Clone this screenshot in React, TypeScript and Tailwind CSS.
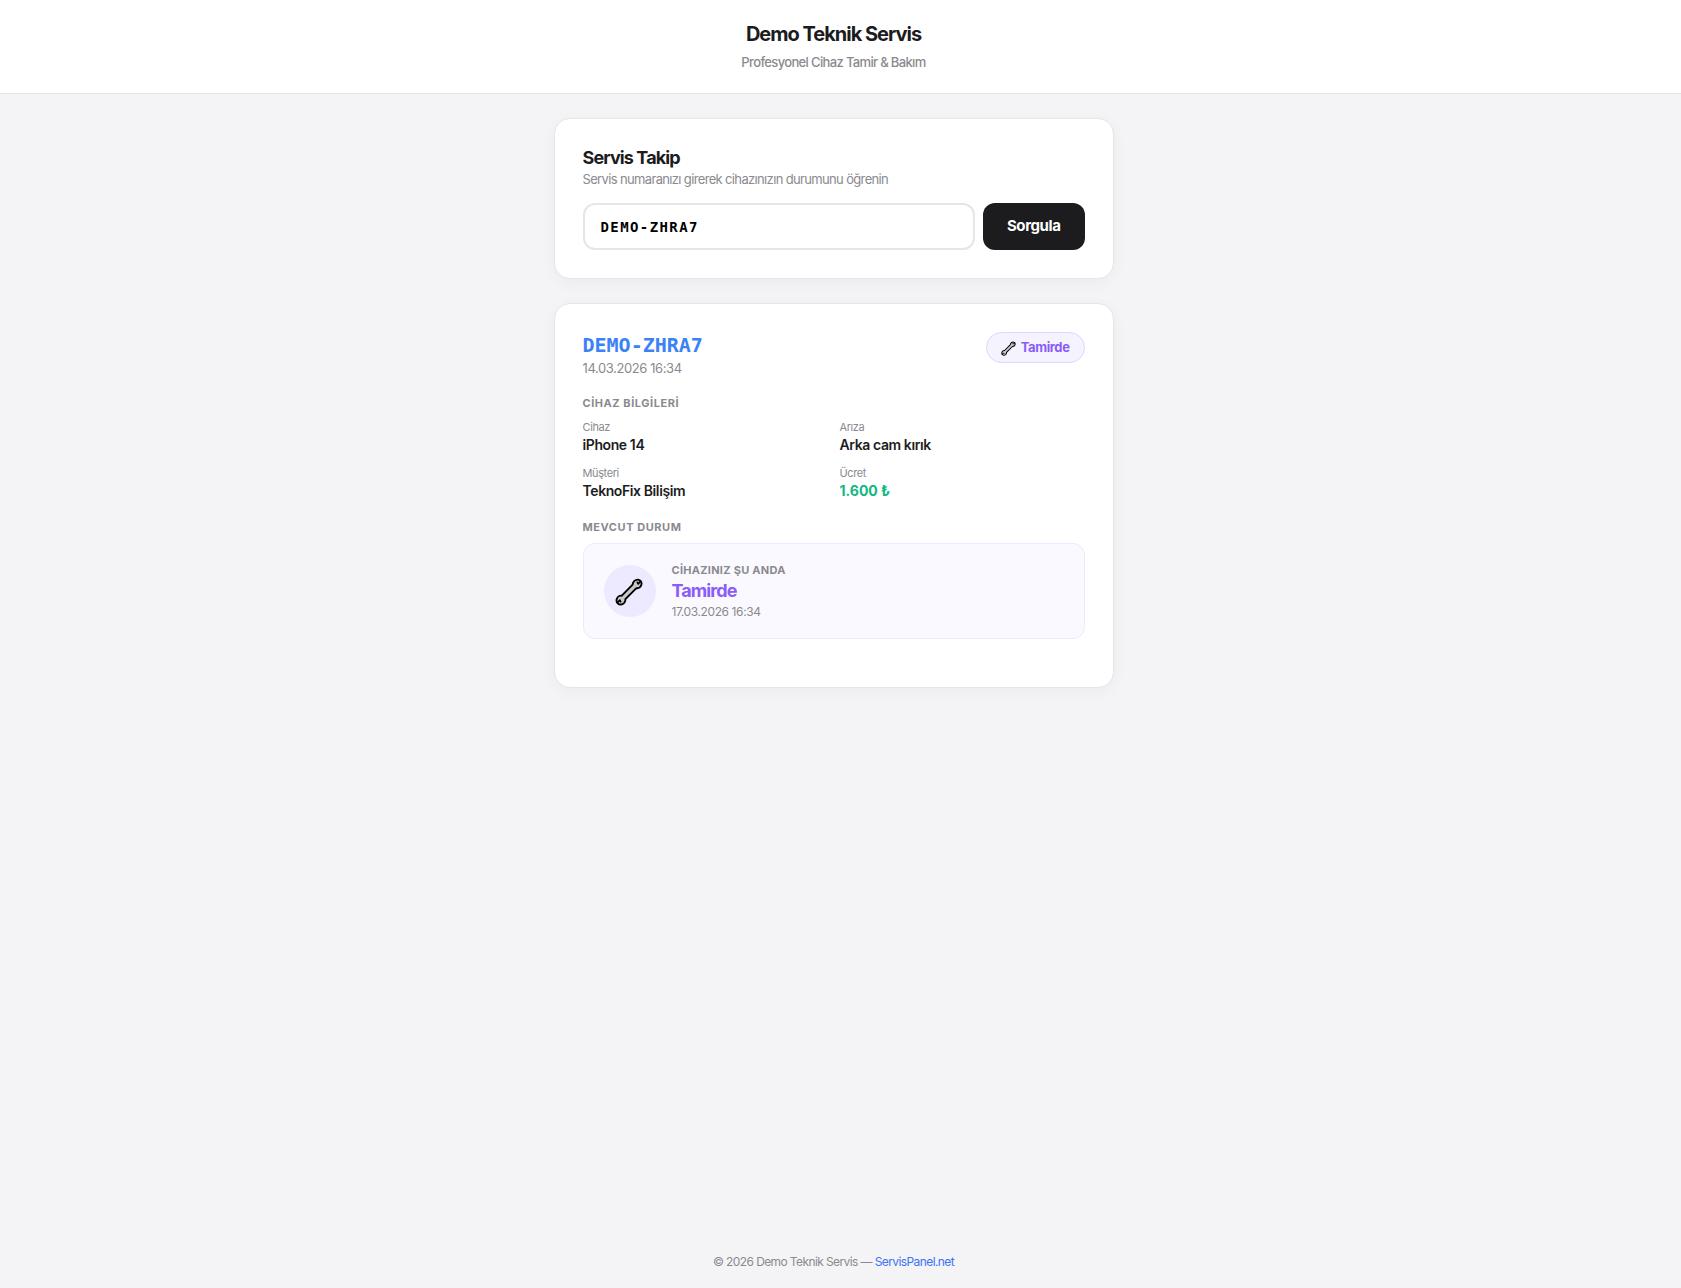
import React, { useState } from "react";

const DEVICE_INFO = [
  { label: "Cihaz", value: "iPhone 14" },
  { label: "Arıza", value: "Arka cam kırık" },
  { label: "Müşteri", value: "TeknoFix Bilişim" },
  { label: "Ücret", value: "1.600 ₺", price: true },
];

function Wrench({ className }: { className: string }) {
  return (
    <svg viewBox="0 -2 30 30" className={className} aria-hidden="true">
      <path
        d="M17.6 6.6C17.8 3.6 20.4 1.4 23 1.6C25.6 2 27.2 4.4 26.4 6.8C25.7 9.3 23.6 10.4 21.4 10.2L10.4 21.2C10.6 23.8 8.8 26.3 6.2 26.5C3.4 26.8 1.2 24.6 1.5 21.8C1.9 19.2 4.2 17.4 6.8 17.7Z"
        fill="#c8c8c8"
        stroke="#000"
        strokeWidth="1.9"
        strokeLinejoin="round"
      />
      <path
        d="M25.6 3.4L23.2 5.8L22.4 4.4M2.4 24.6L4.8 22.2L5.6 23.6"
        fill="none"
        stroke="#000"
        strokeWidth="1.8"
        strokeLinecap="round"
        strokeLinejoin="round"
      />
    </svg>
  );
}

export default function App() {
  const [code, setCode] = useState("DEMO-ZHRA7");

  const handleSubmit = (e: React.FormEvent) => {
    e.preventDefault();
    setCode(code.trim().toUpperCase());
  };

  return (
    <div className="min-h-screen flex flex-col bg-[#f4f4f7] text-[#1c1c1e] font-['Inter',sans-serif] tracking-tight">
      <header className="bg-white border-b border-[#e5e5ea] pr-3.5 py-5 text-center">
        <h1 className="text-xl leading-7 font-bold tracking-tighter">
          Demo Teknik Servis
        </h1>
        <p className="text-[13px] leading-[21px] mt-1 font-medium tracking-tighter text-[#8a8a8e]">
          Profesyonel Cihaz Tamir &amp; Bakım
        </p>
      </header>

      <div className="flex-1 pr-3.5">
        <main className="w-full max-w-[600px] mx-auto px-5 py-6 space-y-6">
          <section className="bg-white border border-[#e5e5ea] rounded-2xl p-7 shadow-[0_4px_16px_rgba(0,0,0,0.04)]">
            <h2 className="text-lg leading-[22px] font-bold tracking-tighter">
              Servis Takip
            </h2>
            <label
              htmlFor="code"
              className="block text-[13px] leading-5 mb-3.5 tracking-tighter text-[#8a8a8e]"
            >
              Servis numaranızı girerek cihazınızın durumunu öğrenin
            </label>
            <form onSubmit={handleSubmit} className="flex gap-2">
              <input
                id="code"
                type="text"
                value={code}
                onChange={(e) => setCode(e.target.value)}
                className="flex-1 min-w-0 h-[47px] px-4 border-2 border-[#e5e5ea] rounded-xl text-black text-sm font-bold font-['DejaVu_Sans_Mono',monospace] tracking-widest focus:outline-none focus:border-blue-500"
              />
              <button
                type="submit"
                className="cursor-pointer px-6 bg-[#1c1c1e] text-white text-[15px] font-bold rounded-xl"
              >
                Sorgula
              </button>
            </form>
          </section>

          <section className="bg-white border border-[#e5e5ea] rounded-2xl p-7 shadow-[0_4px_16px_rgba(0,0,0,0.04)]">
            <div className="flex justify-between items-start mb-4">
              <div>
                <p className="text-xl leading-[26px] font-bold font-['DejaVu_Sans_Mono',monospace] tracking-normal text-[#3b82f6]">
                  DEMO-ZHRA7
                </p>
                <p className="text-[13px] leading-[21px] text-[#8a8a8e]">
                  14.03.2026 16:34
                </p>
              </div>
              <span className="flex items-center gap-1 h-[31px] px-3.5 rounded-full border border-[#ddd6fe] bg-[#f5f3ff] text-[13px] font-bold text-[#8b5cf6]">
                <Wrench className="size-4" />
                Tamirde
              </span>
            </div>

            <h3 className="text-[11px] leading-4 mb-2 font-bold tracking-wider text-[#8a8a8e]">
              CİHAZ BİLGİLERİ
            </h3>
            <dl className="grid grid-cols-2 gap-x-3 gap-y-2.5 mb-[18px]">
              {DEVICE_INFO.map((item) => (
                <div key={item.label}>
                  <dt className="text-[11px] leading-4 text-[#8a8a8e]">
                    {item.label}
                  </dt>
                  <dd
                    className={
                      item.price
                        ? "text-sm leading-5 font-bold tracking-normal text-[#10b981]"
                        : "text-sm leading-5 font-semibold"
                    }
                  >
                    {item.value}
                  </dd>
                </div>
              ))}
            </dl>

            <h3 className="text-[11px] leading-4 mb-2 font-bold tracking-wider text-[#8a8a8e]">
              MEVCUT DURUM
            </h3>
            <div className="flex items-center gap-4 px-5 py-4 mb-5 rounded-xl border border-[#ede9fe] bg-[#faf9ff]">
              <div className="size-[52px] flex items-center justify-center rounded-full bg-[#ede9fe]">
                <Wrench className="size-[30px]" />
              </div>
              <div>
                <p className="text-[11px] leading-5 font-bold tracking-wide text-[#8a8a8e]">
                  CİHAZINIZ ŞU ANDA
                </p>
                <p className="text-lg leading-[22px] font-bold tracking-tighter text-[#8b5cf6]">
                  Tamirde
                </p>
                <p className="text-xs leading-5 text-[#8a8a8e]">
                  17.03.2026 16:34
                </p>
              </div>
            </div>
          </section>
        </main>
      </div>

      <footer className="pr-3.5 py-4 text-center text-xs leading-5 tracking-tighter text-[#8a8a8e]">
        © 2026 Demo Teknik Servis —{" "}
        <a href="#" className="text-[#3b72f6]">
          ServisPanel.net
        </a>
      </footer>
    </div>
  );
}
